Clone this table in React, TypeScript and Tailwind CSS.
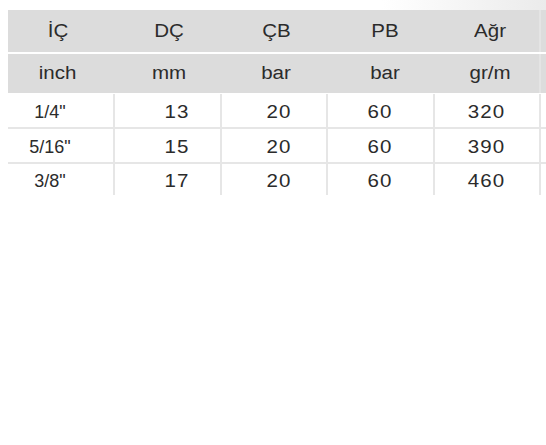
import React from "react";

const cols = "grid grid-cols-[105px_107px_106px_107px_106px_120px]";

const headers = ["İÇ", "DÇ", "ÇB", "PB", "Ağr", ""];
const units = ["inch", "mm", "bar", "bar", "gr/m", ""];
const rows = [
  ["1/4\"", "13", "20", "60", "320", ""],
  ["5/16\"", "15", "20", "60", "390", ""],
  ["3/8\"", "17", "20", "60", "460", ""],
];

// small per-column nudges so the text sits where the reference has it
const headShift = ["pr-[6px]", "pl-[5px]", "pl-[7px]", "pl-[11px]", "pl-[8px]", ""];
const cellShift = ["pr-[21px]", "pl-[19px]", "pl-[11px]", "", "", ""];

const Txt: React.FC<React.PropsWithChildren<{ wide?: boolean; digits?: boolean }>> = ({
  children,
  wide = true,
  digits,
}) => (
  <span className={`inline-block ${wide ? "scale-x-[1.14]" : ""} ${digits ? "tracking-[1px]" : ""}`}>
    {children}
  </span>
);

const App: React.FC = () => {
  return (
    <div
      className="w-[546px] h-[445px] overflow-hidden bg-white text-[18px] text-[#2b2b2b]"
      style={{ fontFamily: '"Liberation Sans", Arial, sans-serif' }}
    >
      {/* shadow of the block above, top right */}
      <div className="h-[10px] bg-linear-to-r from-white from-70% to-[#ebebeb]" />

      <div className="ml-[8px]">
        {/* header: names */}
        <div className={`${cols} h-[42px] bg-[#dcdcdc]`}>
          {headers.map((h, i) => (
            <div
              key={i}
              className={`flex items-center justify-center pt-[1px] ${headShift[i]} ${i === 5 ? "border-l-2 border-[#e4e4e4]" : ""}`}
            >
              <Txt>{h}</Txt>
            </div>
          ))}
        </div>

        {/* header: units */}
        <div className={`${cols} mt-[2px] h-[39px] bg-[#dcdcdc]`}>
          {units.map((u, i) => (
            <div
              key={i}
              className={`flex items-center justify-center ${headShift[i]} ${i === 5 ? "border-l-2 border-[#e4e4e4]" : ""}`}
            >
              <Txt>{u}</Txt>
            </div>
          ))}
        </div>

        {/* data */}
        {rows.map((r, ri) => (
          <div
            key={ri}
            className={`${cols} ${ri < rows.length - 1 ? "h-[35px] border-b-2 border-[#e6e6e6]" : "h-[26px]"} ${ri === 0 ? "mt-[1px]" : ""}`}
          >
            {r.map((c, ci) => (
              <div
                key={ci}
                className={`flex items-center justify-center ${ri < rows.length - 1 ? "pt-[3px]" : "pt-[4px]"} ${cellShift[ci]} ${ci > 0 ? "border-l-2 border-[#e6e6e6]" : ""}`}
              >
                {ci === 0 ? <Txt wide={false}>{c}</Txt> : <Txt digits>{c}</Txt>}
              </div>
            ))}
          </div>
        ))}
      </div>
    </div>
  );
};

export default App;
